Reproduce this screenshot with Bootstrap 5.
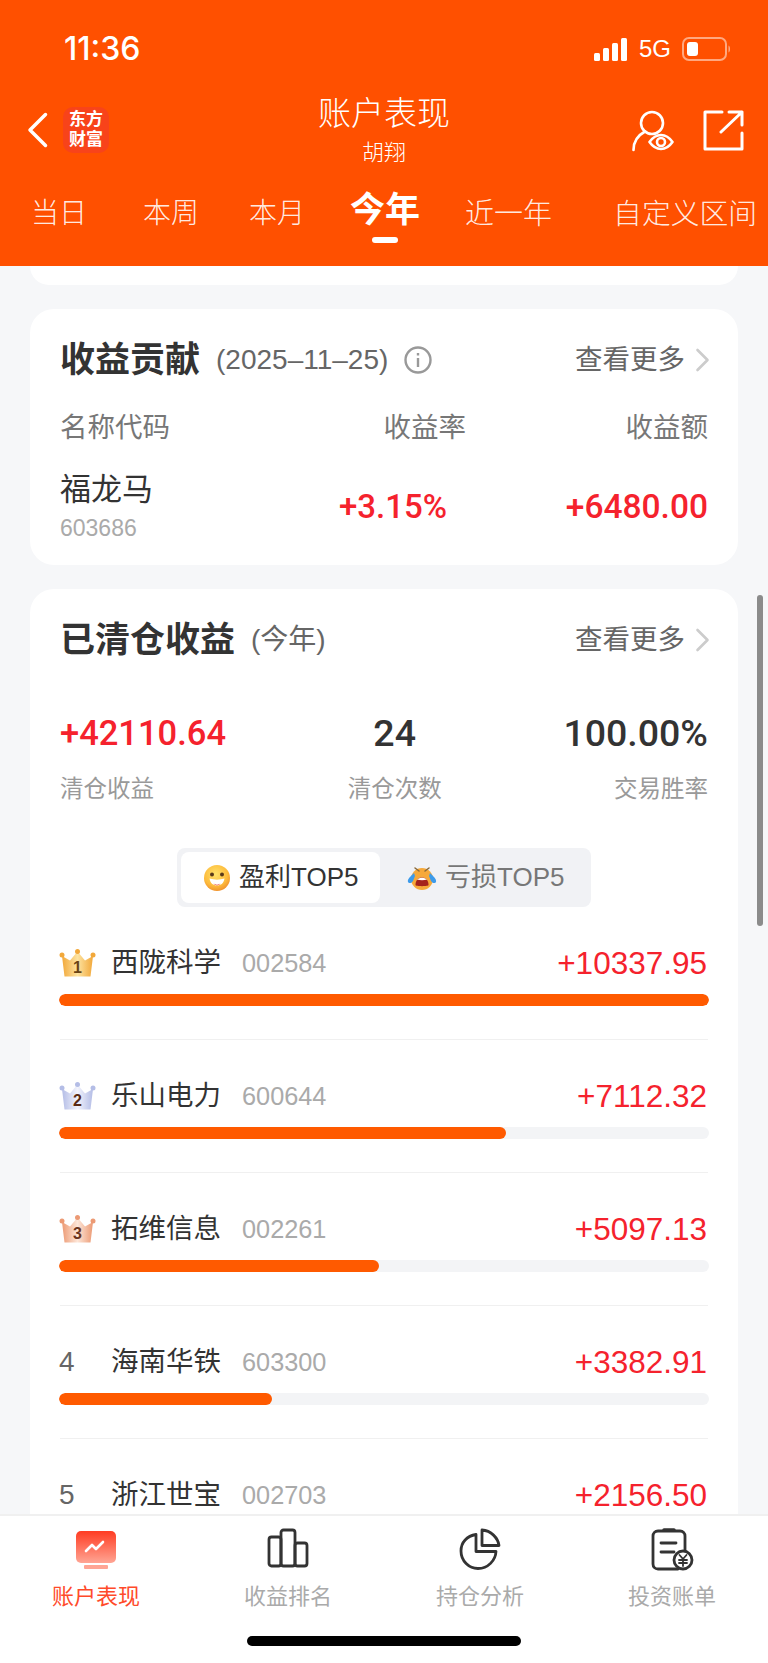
<!DOCTYPE html>
<html lang="zh-CN">
  <head>
    <title>账户表现</title>
    <meta charset="UTF-8" />
    <meta name="viewport" content="width=device-width" />
    <link rel="stylesheet" href="https://cdn.jsdelivr.net/npm/bootstrap@5.3.3/dist/css/bootstrap.min.css" type="text/css" />
    <script src="https://cdn.jsdelivr.net/npm/bootstrap@5.3.3/dist/js/bootstrap.bundle.min.js"></script>
    <style>
      html, body { height: 100%; }
      body { height: 1663px; overflow: hidden; background: #f6f7f9; font-family: "Liberation Sans", "Noto Sans CJK SC", sans-serif; color: #333; }
      .app-top { height: 266px; background: #ff5000; color: #fff; flex: none; }
      .status-row { height: 96px; padding: 2px 36px 0 64px; }
      .status-time { font-family: Inter, "Liberation Sans", sans-serif; font-size: 32px; font-weight: 500; line-height: 1; }
      .status-net { font-size: 24px; margin: 0 11px 0 11px; line-height: 1; }
      .title-row { height: 72px; padding: 0 24px; }
      .title-side { flex: 1 1 0; padding-top: 11px; }
      .title-right { padding-top: 14px; gap: 29px; }
      .back-icon { margin-left: 3px; margin-right: 15px; }
      .brand-logo { width: 46px; height: 46px; border-radius: 10px; background: #f8431a; font-size: 17px; line-height: 20px; font-weight: 700; text-align: center; padding-top: 3px; }
      .title-main { font-size: 33px; line-height: 36px; font-weight: 300; }
      .title-sub { font-size: 22px; line-height: 30px; margin-top: 6px; font-weight: 300; }
      .range-tabs { height: 92px; padding-left: 31px; white-space: nowrap; }
      .range-tab { font-size: 28px; line-height: 36px; font-weight: 300; color: rgba(255,255,255,.9); }
      .range-tab:nth-child(2) { margin-left: 56px; }
      .range-tab:nth-child(3) { margin-left: 50px; }
      .range-tab:nth-child(4) { margin-left: 45px; }
      .range-tab:nth-child(5) { margin-left: 45px; font-size: 29px; }
      .range-tab:nth-child(6) { margin-left: 61px; font-size: 28.800px; }
      .range-on { position: relative; font-size: 35px; font-weight: 700; color: #fff; margin-bottom: 8px; }
      .range-on::after { content: ""; position: absolute; left: 22px; top: 45px; width: 26px; height: 6px; border-radius: 3px; background: #fff; }
      .page-body { flex: 1 1 0; min-height: 0; overflow: hidden; padding: 0 30px; position: relative; }
      .scroll-thumb { position: absolute; right: 5px; top: 329px; width: 6px; height: 331px; border-radius: 3px; background: #8b8b8b; }
      .panel { border: 0; border-radius: 24px; background: #fff; margin-bottom: 24px; padding: 34px 30px 24px; }
      .panel-stub { height: 19px; padding: 0; border-radius: 0 0 24px 24px; }
      .panel-long { margin-bottom: 0; padding-bottom: 0; }
      .head-row { height: 34px; }
      .head-title { font-size: 35px; line-height: 34px; font-weight: 700; color: #333; }
      .head-note { font-size: 28px; line-height: 34px; color: #666; margin-left: 16px; }
      .head-more { font-size: 27.500px; line-height: 34px; color: #666; }
      .head-chevron { margin-left: 10px; margin-right: -2px; }
      .cols-head { margin-top: 36px; margin-bottom: -2px; font-size: 27.500px; line-height: 30px; color: #777; }
      .cols-amt { width: 242px; }
      .cols-data { margin-top: 32px; }
      .stock-name { font-size: 31px; line-height: 34px; color: #333; }
      .stock-code { font-size: 23px; line-height: 26px; margin-top: 8px; color: #aaa; }
      .gain-md { font-family: Roboto, "Liberation Sans", sans-serif; font-weight: 500; color: #f5222d; font-size: 33px; line-height: 34px; }
      .gain-wide { font-size: 33.500px; }
      .vals-amt { width: 261px; }
      .stat-row { margin-top: 58px; }
      .stat-num { font-family: Roboto, "Liberation Sans", sans-serif; font-size: 37.500px; line-height: 36px; font-weight: 500; color: #333; }
      .stat-num.is-up { font-size: 34.500px; color: #f5222d; }
      .stat-label { font-size: 23.500px; line-height: 30px; margin-top: 23px; margin-bottom: -1px; color: #999; }
      .top-switch { width: 414px; height: 59px; margin: 45px auto 0; padding: 4px; border-radius: 8px; background: #f1f2f5; }
      .switch-item { height: 51px; font-size: 26px; color: #777; }
      .switch-on { width: 199px; border-radius: 8px; background: #fff; color: #333; padding-left: 22px; }
      .switch-off { padding-left: 27px; }
      .rank-row { padding: 38px 0 33px; border-bottom: 1px solid #f0f0f0; }
      .rank-line { height: 36px; }
      .rank-mark { width: 52px; flex: none; font-size: 28px; color: #666; line-height: 36px; margin-left: -1px; }
      .rank-name { font-size: 27.500px; line-height: 36px; color: #333; }
      .rank-code { font-size: 25.300px; line-height: 36px; color: #aaa; margin-left: 21px; }
      .rank-gain { font-size: 31.500px; line-height: 36px; color: #f5222d; margin-right: 1px; }
      .rank-bar { height: 12px; margin: 13px -1px 0 -1px; border-radius: 6px; background: #f3f4f6; }
      .rank-bar .progress-bar { background: #ff5a00; border-radius: 6px; }
      .app-foot { height: 149px; flex: none; background: #fff; border-top: 2px solid #f0f0f0; position: relative; }
      .foot-item { padding-top: 12px; text-align: center; }
      .foot-icon { height: 44px; display: block; margin: 0 auto; }
      .foot-label { font-size: 22px; line-height: 30px; margin-top: 10px; color: #aaa; }
      .foot-label.is-on { color: #ff4a2a; }
      .home-bar { position: absolute; left: 247px; top: 120px; width: 274px; height: 10px; border-radius: 5px; background: #000; }
    </style>
  </head>
  <body class="d-flex flex-column">
    <header class="app-top">
      <div class="status-row d-flex align-items-center">
        <span class="status-time">11:36</span>
        <span class="ms-auto d-flex align-items-center">
          <svg width="34" height="23" viewBox="0 0 34 23" fill="#fff"><rect x="0" y="15" width="6" height="8" rx="1.5"/><rect x="9" y="10" width="6" height="13" rx="1.5"/><rect x="18" y="5" width="6" height="18" rx="1.5"/><rect x="27" y="0" width="6" height="23" rx="1.5"/></svg>
          <span class="status-net">5G</span>
          <svg width="50" height="24" viewBox="0 0 50 24"><rect x="1" y="1" width="43" height="22" rx="6" fill="none" stroke="#fff" stroke-opacity=".5" stroke-width="2"/><rect x="5" y="5" width="11" height="14" rx="3" fill="#fff"/><path d="M46.500 8.500c2 .8 2 6.200 0 7z" fill="#fff" fill-opacity=".5"/></svg>
        </span>
      </div>
      <div class="title-row d-flex align-items-start">
        <div class="title-side d-flex align-items-center">
          <svg class="back-icon" width="21" height="36" viewBox="0 0 21 36" fill="none" stroke="#fff" stroke-width="3.500" stroke-linecap="round" stroke-linejoin="round"><path d="M18.500 2.500 3 18l15.500 15.500"/></svg>
          <div class="brand-logo">东方<br>财富</div>
        </div>
        <div class="text-center">
          <div class="title-main">账户表现</div>
          <div class="title-sub">胡翔</div>
        </div>
        <div class="title-side title-right d-flex justify-content-end align-items-start">
          <svg width="42" height="42" viewBox="0 0 42 42" fill="none" stroke="#fff" stroke-width="2.600" stroke-linecap="round" stroke-linejoin="round"><circle cx="20" cy="13" r="11"/><path d="M1.500 40c0-9 5-15 11.500-18.500"/><path d="M17.500 32c3.500-5 7.500-7 11.500-7s8 2 11.500 7c-3.500 5-7.500 7-11.500 7s-8-2-11.500-7z" fill="#ff5000"/><circle cx="29" cy="32" r="4"/></svg>
          <svg width="41" height="41" viewBox="0 0 41 41" fill="none" stroke="#fff" stroke-width="3" stroke-linecap="round" stroke-linejoin="round"><path d="M19 2H2v37h37V23"/><path d="M18 22 39 2M26 2h13v13"/></svg>
        </div>
      </div>
      <nav class="range-tabs d-flex align-items-center">
        <span class="range-tab">当日</span>
        <span class="range-tab">本周</span>
        <span class="range-tab">本月</span>
        <span class="range-tab range-on">今年</span>
        <span class="range-tab">近一年</span>
        <span class="range-tab">自定义区间</span>
      </nav>
    </header>

    <main class="page-body">
      <div class="scroll-thumb"></div>
      <section class="card panel panel-stub"></section>

      <section class="card panel">
        <div class="head-row d-flex align-items-center">
          <span class="head-title">收益贡献</span>
          <span class="head-note">(2025–11–25)</span>
          <svg class="ms-3" width="28" height="28" viewBox="0 0 28 28" fill="none" stroke="#999" stroke-width="2.400"><circle cx="14" cy="14" r="12.500"/><path d="M14 12v9"/><path d="M14 7v2.500"/></svg>
          <span class="head-more ms-auto">查看更多</span>
          <svg class="head-chevron" width="15" height="24" viewBox="0 0 15 24" fill="none" stroke="#ccc" stroke-width="2.600" stroke-linecap="round" stroke-linejoin="round"><path d="M2.500 2l10 10-10 10"/></svg>
        </div>
        <div class="cols-head d-flex">
          <span class="flex-grow-1">名称代码</span>
          <span>收益率</span>
          <span class="cols-amt text-end">收益额</span>
        </div>
        <div class="cols-data d-flex align-items-center">
          <div class="flex-grow-1">
            <div class="stock-name">福龙马</div>
            <div class="stock-code">603686</div>
          </div>
          <span class="gain-md">+3.15%</span>
          <span class="gain-md gain-wide vals-amt text-end">+6480.00</span>
        </div>
      </section>

      <section class="card panel panel-long">
        <div class="head-row d-flex align-items-center">
          <span class="head-title">已清仓收益</span>
          <span class="head-note">(今年)</span>
          <span class="head-more ms-auto">查看更多</span>
          <svg class="head-chevron" width="15" height="24" viewBox="0 0 15 24" fill="none" stroke="#ccc" stroke-width="2.600" stroke-linecap="round" stroke-linejoin="round"><path d="M2.500 2l10 10-10 10"/></svg>
        </div>
        <div class="stat-row d-flex justify-content-between">
          <div>
            <div class="stat-num is-up">+42110.64</div>
            <div class="stat-label">清仓收益</div>
          </div>
          <div class="text-center">
            <div class="stat-num">24</div>
            <div class="stat-label">清仓次数</div>
          </div>
          <div class="text-end">
            <div class="stat-num">100.00%</div>
            <div class="stat-label">交易胜率</div>
          </div>
        </div>

        <div class="top-switch d-flex">
          <div class="switch-item switch-on d-flex align-items-center gap-2">
            <svg width="28" height="28" viewBox="0 0 28 28">
              <defs><radialGradient id="faceA" cx=".45" cy=".35" r=".7"><stop offset="0" stop-color="#ffe36a"/><stop offset=".65" stop-color="#fdbb3c"/><stop offset="1" stop-color="#ee8a2a"/></radialGradient></defs>
              <circle cx="14" cy="14" r="13" fill="url(#faceA)"/>
              <circle cx="9" cy="10.500" r="2" fill="#5a3a1a"/><circle cx="19" cy="10.500" r="2" fill="#5a3a1a"/>
              <path d="M6.500 14.500c5 1.500 10 1.500 15 0-.8 5-4 7-7.500 7s-6.700-2-7.500-7z" fill="#fff"/>
              <path d="M10.500 19.500c2 1.500 5 1.500 7 0-2 2.500-5 2.500-7 0z" fill="#ef5a4a"/>
            </svg>
            <span>盈利TOP5</span>
          </div>
          <div class="switch-item switch-off d-flex align-items-center gap-2">
            <svg width="30" height="26" viewBox="0 0 30 26">
              <circle cx="15" cy="14" r="11" fill="#f6a93a"/>
              <path d="M8 3l4 3M22 3l-4 3" stroke="#8a6a3a" stroke-width="1.500" stroke-linecap="round"/>
              <path d="M7 8c-3 3-7 6-6 9 1 2 4 1 5-1l2-5zM23 8c3 3 7 6 6 9-1 2-4 1-5-1l-2-5z" fill="#3d9bea"/>
              <path d="M8.500 20c0-5 3-7.500 6.500-7.500s6.500 2.500 6.500 7.500c0 1.500-13 1.500-13 0z" fill="#a5231c"/>
              <path d="M10 14.500c3-2.500 7-2.500 10 0-3 1-7 1-10 0z" fill="#fff"/>
            </svg>
            <span>亏损TOP5</span>
          </div>
        </div>

        <div id="rankList"></div>
      </section>
    </main>

    <footer class="app-foot">
      <div class="row g-0">
        <div class="col-3 foot-item">
          <svg class="foot-icon" width="44" height="44" viewBox="0 0 44 44">
            <defs><linearGradient id="tabOn" x1="0" y1="0" x2="0" y2="1"><stop offset="0" stop-color="#ff3c22"/><stop offset="1" stop-color="#ffa594"/></linearGradient></defs>
            <rect x="2" y="3" width="40" height="32" rx="5" fill="url(#tabOn)"/>
            <rect x="10" y="37" width="24" height="4" rx="1" fill="#ffa594"/>
            <path d="M12 23l6-6 4 4 7-7" fill="none" stroke="#fff" stroke-width="2.600" stroke-linecap="round" stroke-linejoin="round"/>
          </svg>
          <div class="foot-label is-on">账户表现</div>
        </div>
        <div class="col-3 foot-item">
          <svg class="foot-icon" width="44" height="44" viewBox="0 0 44 44" fill="none" stroke="#333" stroke-width="2.800" stroke-linejoin="round"><rect x="3" y="9" width="12" height="29" rx="2.500"/><rect x="15" y="2" width="14" height="36" rx="2.500"/><rect x="29" y="15" width="12" height="23" rx="2.500"/></svg>
          <div class="foot-label">收益排名</div>
        </div>
        <div class="col-3 foot-item">
          <svg class="foot-icon" width="44" height="44" viewBox="0 0 44 44" fill="none" stroke="#333" stroke-width="2.800" stroke-linejoin="round"><path d="M18 6.500C9 8 3 14 3 23c0 10 8 17.500 17 17.500 10 0 17.500-8 18-17H18z"/><path d="M24 2c9 .5 16 8 17 15.500H24z"/></svg>
          <div class="foot-label">持仓分析</div>
        </div>
        <div class="col-3 foot-item">
          <svg class="foot-icon" width="44" height="44" viewBox="0 0 44 44" fill="none" stroke="#333" stroke-width="2.800" stroke-linecap="round" stroke-linejoin="round">
            <path d="M28 41H8c-3 0-5-2-5-5V8c0-3 2-5 5-5h22c3 0 5 2 5 5v16"/>
            <path d="M14 2h10" stroke-width="3.500"/>
            <path d="M11 15h15M11 24h13"/>
            <circle cx="33" cy="32" r="9" fill="#fff"/>
            <path d="M29.500 27l3.500 4 3.500-4M29 32h8M29 35h8M33 31v7" stroke-width="1.800"/>
          </svg>
          <div class="foot-label">投资账单</div>
        </div>
      </div>
      <div class="home-bar"></div>
    </footer>

    <script>
      const rankList = document.querySelector("#rankList")
      const rankData = [
        { name: "西陇科学", code: "002584", gain: 10337.95, colors: ["#fde3a0", "#f2a83a"], digit: "#6a4414" },
        { name: "乐山电力", code: "600644", gain: 7112.32, colors: ["#f2f3fc", "#b4bde6"], digit: "#5a2a14" },
        { name: "拓维信息", code: "002261", gain: 5097.13, colors: ["#fde6d8", "#ec9a74"], digit: "#6a3420" },
        { name: "海南华铁", code: "603300", gain: 3382.91 },
        { name: "浙江世宝", code: "002703", gain: 2156.50 }
      ]

      function crownSvg(item, i){
        return `<svg width="37" height="28" viewBox="0 0 37 28">
          <defs><linearGradient id="crown${i}" x1="0" y1="0" x2="1" y2="0"><stop offset="0" stop-color="${item.colors[1]}"/><stop offset=".5" stop-color="${item.colors[0]}"/><stop offset="1" stop-color="${item.colors[1]}"/></linearGradient></defs>
          <path d="M3 7l8 4.500 7.500-9L26 11.500 34 7l-2.500 20.500h-26z" fill="url(#crown${i})"/>
          <circle cx="3" cy="6" r="2.500" fill="${item.colors[1]}"/><circle cx="18.500" cy="2.500" r="2.500" fill="${item.colors[1]}"/><circle cx="34" cy="6" r="2.500" fill="${item.colors[1]}"/>
          <text x="18.500" y="24" text-anchor="middle" font-size="16" font-weight="700" fill="${item.digit}" font-family="Liberation Sans">${i + 1}</text>
        </svg>`
      }

      for(let i = 0; i < rankData.length; i++){
        const item = rankData[i]
        const percent = item.gain / rankData[0].gain * 100
        const rowElement = document.createElement("div")
        rowElement.className = "rank-row"
        rowElement.innerHTML = `
          <div class="rank-line d-flex align-items-center">
            <span class="rank-mark d-flex align-items-center">${item.colors ? crownSvg(item, i) : i + 1}</span>
            <span class="rank-name">${item.name}</span>
            <span class="rank-code">${item.code}</span>
            <span class="rank-gain ms-auto">+${item.gain.toFixed(2)}</span>
          </div>
          <div class="progress rank-bar"><div class="progress-bar" style="width: ${percent}%"></div></div>
        `
        rankList.appendChild(rowElement)
      }
    </script>
  </body>
</html>
